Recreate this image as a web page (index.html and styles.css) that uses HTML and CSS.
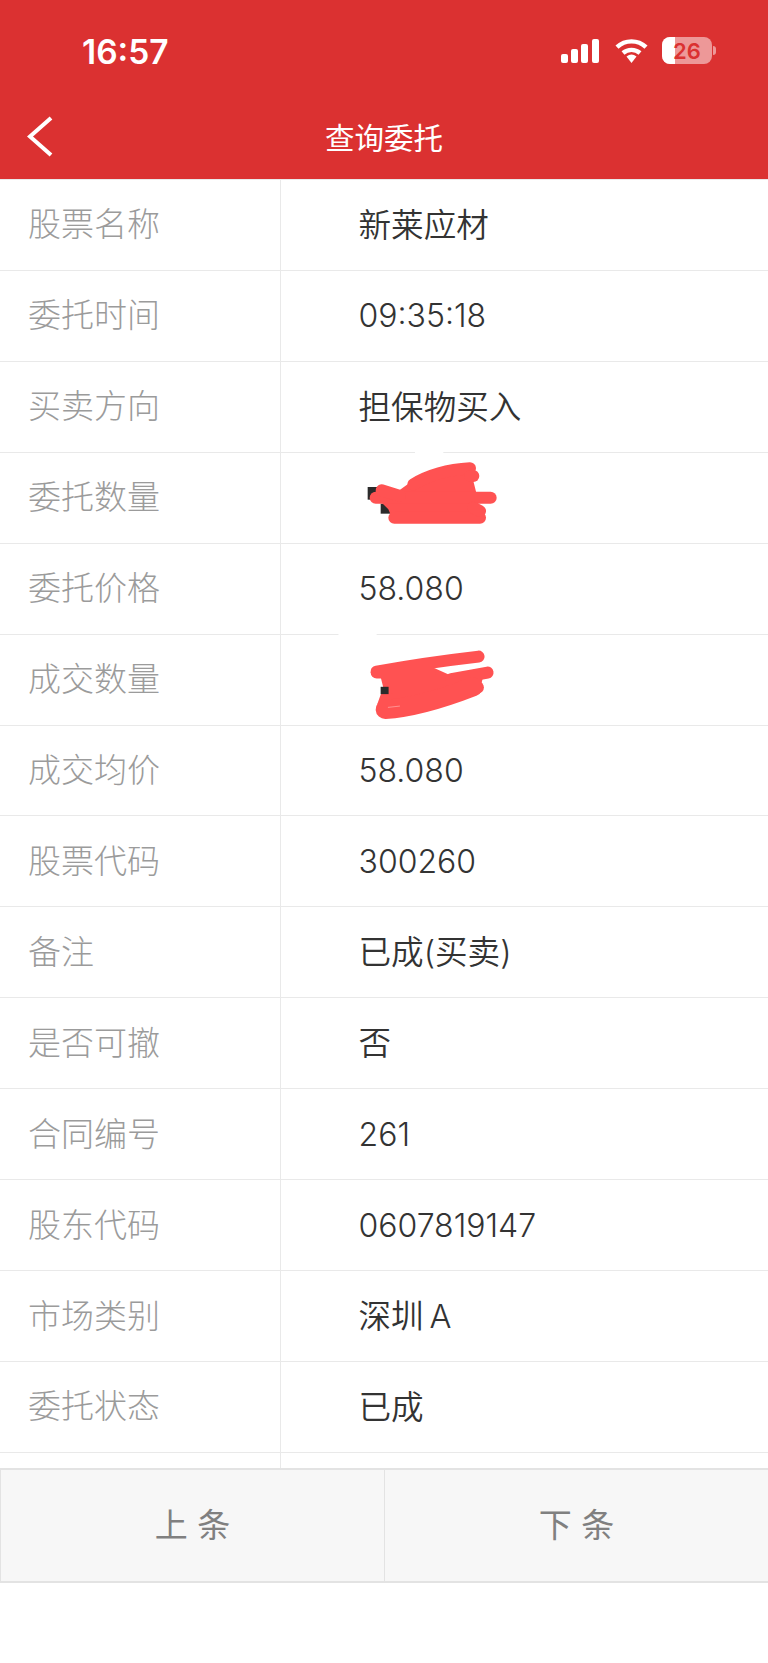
FILE: index.html
```html
<!DOCTYPE html>
<html lang="zh-CN">
<head>
    <meta charset="UTF-8">
    <meta name="viewport" content="width=device-width, initial-scale=1.0">
    <title>查询委托</title>
    <link rel="stylesheet" href="styles.css">
</head>
<body>
    <header class="header">
        <div class="status-bar">
            <span class="time">16:57</span>
            <div class="status-icons">
                <svg class="signal" width="38" height="24" viewBox="0 0 38 24">
                    <rect x="0" y="15" width="7" height="9" rx="2"/>
                    <rect x="10" y="10" width="7" height="14" rx="2"/>
                    <rect x="20" y="5" width="7" height="19" rx="2"/>
                    <rect x="31" y="0" width="7" height="24" rx="2"/>
                </svg>
                <svg class="wifi" width="33" height="25" viewBox="0 0 33 25">
                    <path class="wifi-arc" d="M2 9.2 A21 21 0 0 1 31 9.2"/>
                    <path class="wifi-arc" d="M8 15 A13 13 0 0 1 25 15"/>
                    <path class="wifi-dot" d="M11.5 18.6 A8 8 0 0 1 21.5 18.6 L16.5 25 Z"/>
                </svg>
                <div class="battery">
                    <div class="battery-body">
                        <div class="battery-fill"></div>
                        <span class="battery-level">26</span>
                    </div>
                    <div class="battery-tip"></div>
                </div>
            </div>
        </div>
        <div class="nav-bar">
            <svg class="back" width="26" height="41" viewBox="0 0 26 41">
                <path d="M24 2 L3 20.5 L24 39"/>
            </svg>
            <h1 class="title">查询委托</h1>
        </div>
    </header>

    <main class="table">
        <div class="row"><div class="label">股票名称</div><div class="value cjk">新莱应材</div></div>
        <div class="row"><div class="label">委托时间</div><div class="value">09:35:18</div></div>
        <div class="row"><div class="label">买卖方向</div><div class="value cjk">担保物买入</div></div>
        <div class="row">
            <div class="label">委托数量</div>
            <div class="value">
                <svg class="scribble scribble-one" width="150" height="80" viewBox="300 60 450 240">
                    <rect class="smudge" x="465" y="60" width="85" height="12"/>
                    <rect class="hidden-text" x="323" y="168" width="30" height="38"/>
                    <rect class="hidden-text" x="362" y="218" width="32" height="30"/>
                    <path class="ink-fill" d="M365 165 L415 180 L470 140 L620 100 L640 150 L650 190 L660 250 L400 270 L385 235 L350 200 Z"/>
                    <path class="ink" d="M347 200 L692 200"/>
                    <path class="ink" d="M403 260 L660 260"/>
                    <path class="ink" d="M640 230 L660 240"/>
                    <path class="ink" d="M460 160 Q530 118 630 112"/>
                    <path class="ink" d="M630 135 L640 135"/>
                    <path class="ink" d="M365 178 L420 195"/>
                </svg>
            </div>
        </div>
        <div class="row"><div class="label">委托价格</div><div class="value">58.080</div></div>
        <div class="row">
            <div class="label">成交数量</div>
            <div class="value">
                <svg class="scribble scribble-two" width="167" height="93" viewBox="220 600 500 280">
                    <rect class="smudge" x="235" y="605" width="115" height="12"/>
                    <path class="ink-fill" d="M360 730 L525 712 L575 735 L670 740 L660 780 L480 840 L380 850 L352 820 L370 770 Z"/>
                    <path class="ink" d="M350 722 Q500 695 657 677"/>
                    <path class="ink" d="M350 725 L510 725"/>
                    <path class="ink" d="M575 745 L684 725"/>
                    <path class="ink" d="M400 770 L655 770"/>
                    <path class="ink-wide" d="M376 836 Q480 830 640 768"/>
                    <rect class="hidden-text" x="362" y="768" width="24" height="22"/>
                    <path class="smudge-line" d="M384 830 L420 826"/>
                </svg>
            </div>
        </div>
        <div class="row"><div class="label">成交均价</div><div class="value">58.080</div></div>
        <div class="row"><div class="label">股票代码</div><div class="value">300260</div></div>
        <div class="row"><div class="label">备注</div><div class="value cjk">已成(买卖)</div></div>
        <div class="row"><div class="label">是否可撤</div><div class="value cjk">否</div></div>
        <div class="row"><div class="label">合同编号</div><div class="value">261</div></div>
        <div class="row"><div class="label">股东代码</div><div class="value">0607819147</div></div>
        <div class="row"><div class="label">市场类别</div><div class="value cjk">深圳&thinsp;A</div></div>
        <div class="row"><div class="label">委托状态</div><div class="value cjk">已成</div></div>
        <div class="row row-empty"><div class="label"></div><div class="value"></div></div>
    </main>

    <footer class="pager">
        <button class="pager-btn">上 条</button>
        <button class="pager-btn">下 条</button>
    </footer>
</body>
</html>
```

FILE: styles.css
```css
:root {
    --red: #db3131;
    --line: #e9e9e9;
    --label: #9b9b9b;
    --text: #333333;
    --ink: #ff5252;
}

* {
    box-sizing: border-box;
}

body {
    margin: 0;
    background: #ffffff;
    font-family: Inter, "Noto Sans CJK SC", sans-serif;
}

.header {
    height: 179px;
    background: var(--red);
    color: #ffffff;
}

.status-bar {
    height: 95px;
    padding: 34px 52px 0 82px;
    display: flex;
    justify-content: space-between;
    align-items: flex-start;
}

.time {
    font-size: 33.5px;
    font-weight: 600;
    line-height: 36px;
}

.status-icons {
    display: flex;
    align-items: center;
    gap: 14px;
    margin-top: 3px;
}

.signal {
    fill: #ffffff;
    margin-right: 2px;
}

.wifi-arc {
    fill: none;
    stroke: #ffffff;
    stroke-width: 4.4;
}

.wifi-dot {
    fill: #ffffff;
}

.battery {
    display: flex;
    align-items: center;
    gap: 1px;
}

.battery-body {
    position: relative;
    width: 50px;
    height: 27px;
    border-radius: 8px;
    background: rgba(255, 255, 255, 0.5);
    overflow: hidden;
    display: flex;
    align-items: center;
    justify-content: center;
}

.battery-fill {
    position: absolute;
    left: 0;
    top: 0;
    bottom: 0;
    width: 13px;
    background: #ffffff;
}

.battery-level {
    position: relative;
    font-size: 22px;
    font-weight: 600;
    color: var(--red);
}

.battery-tip {
    width: 3px;
    height: 9px;
    border-radius: 0 3px 3px 0;
    background: rgba(255, 255, 255, 0.5);
}

.nav-bar {
    position: relative;
    height: 84px;
    display: flex;
    align-items: center;
    justify-content: center;
}

.back {
    position: absolute;
    left: 27px;
    top: 21px;
    fill: none;
    stroke: #ffffff;
    stroke-width: 4;
}

.title {
    margin: 0;
    margin-top: -3px;
    font-size: 29.5px;
    font-weight: 400;
}

.table {
    border-top: 1px solid var(--line);
}

.row {
    display: grid;
    grid-template-columns: 281px 1fr;
    height: 90.93px;
    border-bottom: 1px solid var(--line);
}

.row-empty {
    height: 15px;
    border-bottom: none;
}

.label {
    display: flex;
    align-items: center;
    padding: 0 0 5px 28px;
    border-right: 1px solid var(--line);
    color: var(--label);
    font-size: 33px;
    font-weight: 300;
}

.value {
    position: relative;
    display: flex;
    align-items: center;
    padding-left: 77.5px;
    color: var(--text);
    font-size: 32px;
    font-weight: 350;
}

.cjk {
    padding-bottom: 5px;
    font-size: 32.6px;
}

.scribble {
    position: absolute;
}

.scribble-one {
    left: 79px;
    top: -2px;
}

.scribble-two {
    left: 52px;
    top: -4px;
}

.smudge {
    fill: #ffffff;
}

.hidden-text {
    fill: #2b2b2b;
}

.ink {
    fill: none;
    stroke: var(--ink);
    stroke-width: 36;
    stroke-linecap: round;
}

.ink-wide {
    fill: none;
    stroke: var(--ink);
    stroke-width: 58;
    stroke-linecap: round;
}

.ink-fill {
    fill: var(--ink);
}

.smudge-line {
    fill: none;
    stroke: #ffb0b0;
    stroke-width: 2;
}

.pager {
    display: grid;
    grid-template-columns: 384px 1fr;
    height: 115px;
    background: #f7f7f7;
    border-top: 2px solid #e3e3e3;
    border-bottom: 2px solid #e3e3e3;
}

.pager-btn {
    padding: 0 0 5px;
    border: none;
    border-left: 1px solid #e3e3e3;
    background: transparent;
    color: #808080;
    font-family: inherit;
    font-size: 33px;
    font-weight: 400;
}
```
